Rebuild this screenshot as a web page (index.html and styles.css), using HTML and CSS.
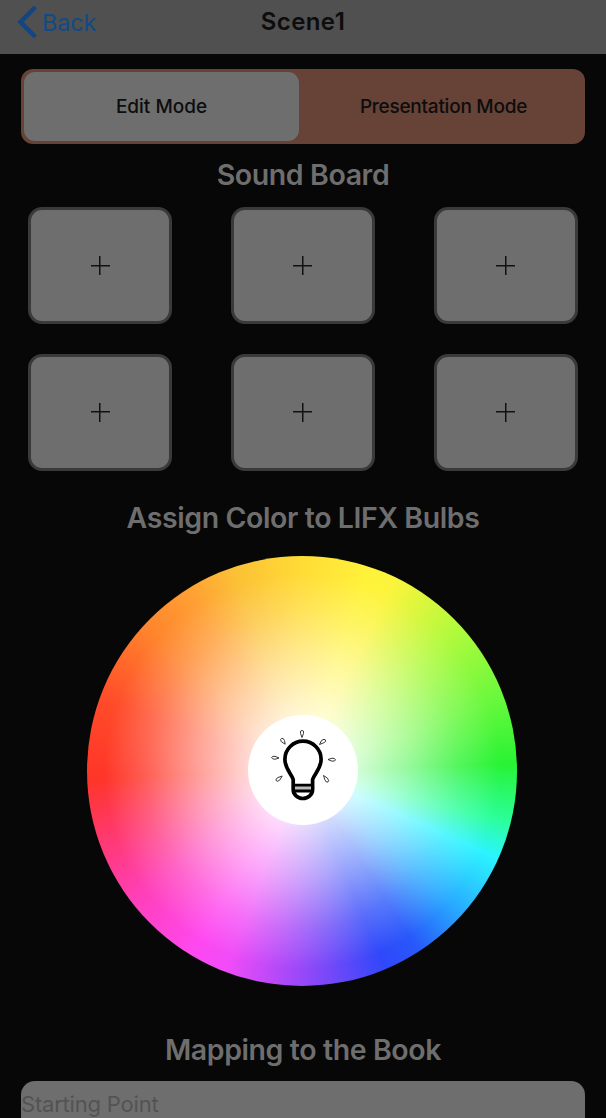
FILE: index.html
```html
<!DOCTYPE html>
<html lang="en">
<head>
<meta charset="utf-8">
<title>Scene1</title>
<link rel="stylesheet" href="styles.css">
</head>
<body>
<header class="navbar">
  <a class="back"><svg class="chevron" width="20" height="34" viewBox="0 0 20 34"><path d="M17 3.500 3.500 17 17 30.500"/></svg><span>Back</span></a>
  <h1 class="title"><span>Scene1</span></h1>
</header>
<main class="content">
  <div class="segments">
    <button class="segment selected"><span>Edit Mode</span></button>
    <button class="segment present"><span>Presentation Mode</span></button>
  </div>
  <h2 class="heading sound"><span>Sound Board</span></h2>
  <section class="board">
    <button class="pad"><i class="plus"></i></button>
    <button class="pad"><i class="plus"></i></button>
    <button class="pad"><i class="plus"></i></button>
    <button class="pad"><i class="plus"></i></button>
    <button class="pad"><i class="plus"></i></button>
    <button class="pad"><i class="plus"></i></button>
  </section>
  <h2 class="heading assign"><span>Assign Color to LIFX Bulbs</span></h2>
  <div class="wheel">
    <div class="hub">
      <svg width="110" height="110" viewBox="0 0 110 110">
        <path d="M45.200 69V64.500C43.500 59 36.900 53.500 36.900 44.300a18.100 18.100 0 0 1 36.200 0C73.100 53.500 66.300 59 64.600 64.500V74.500a9.700 9 0 0 1-19.400 0Z" fill="none" stroke="#000" stroke-width="3.700" stroke-linejoin="round"/>
        <path d="M47 71H63V76H47Z" fill="#bbb"/>
        <path d="M45 70.200H65M45 76H65" stroke="#000" stroke-width="2.800"/>
        <g fill="#fff" stroke="#222" stroke-width=".9">
          <path d="M54 22.500 52.500 18.400Q51.800 15.400 54 15.400T55.500 18.400Z"/>
          <path d="M37.200 29.200 33.300 26.700Q31.700 24.200 33.500 23.400T36.500 25.500Z"/>
          <path d="M31 43 27 44.300Q23.700 44 23.700 42.500T27 41.300Z"/>
          <path d="M34.200 61 31.800 65Q29.500 67.200 28.200 65.700T30 62.500Z"/>
          <path d="M71.500 29.500 73.500 25.500Q76.500 23.300 77.500 25T75.700 27.800Z"/>
          <path d="M80 44.500 84 43.200Q87.500 43.300 87.500 44.800T84 46.200Z"/>
          <path d="M75.500 60.500 79.300 63Q81.600 65.800 80 67T76.800 64.700Z"/>
        </g>
      </svg>
    </div>
  </div>
  <h2 class="heading mapping"><span>Mapping to the Book</span></h2>
  <div class="field"><span>Starting Point</span></div>
</main>
</body>
</html>
```
FILE: styles.css
```css
* { box-sizing: border-box; }
html, body { height: 1118px; overflow: hidden; }
body {
  margin: 0;
  background: #070707;
  font-family: Inter, "Liberation Sans", sans-serif;
  color: #0d0d0d;
}
button { border: 0; padding: 0; font: inherit; color: inherit; }
h1, h2 { margin: 0; white-space: nowrap; }
.navbar {
  height: 54px;
  background: #505050;
  display: grid;
  grid-template-columns: 1fr auto 1fr;
}
.back {
  display: flex;
  align-items: center;
  height: 44px;
  padding-left: 17px;
  gap: 5px;
  color: #114a86;
  font-size: 23.500px;
  letter-spacing: -.2px;
}
.chevron { fill: none; stroke: #114682; stroke-width: 4.500; stroke-linecap: round; }
.title { font-size: 24px; font-weight: 600; line-height: 44px; letter-spacing: .4px; }
.content { padding: 15px 21px 0; display: flex; flex-direction: column; }
.segments {
  display: grid;
  grid-template-columns: 275px 1fr;
  height: 75px;
  padding: 3px;
  border-radius: 12px;
  background: #664237;
}
.segment { font-size: 19px; font-weight: 500; background: none; border-radius: 11px; }
.segment.selected { background: #6e6e6e; }
.segment.present { padding-left: 6px; letter-spacing: -.25px; }
.heading {
  font-size: 28.500px;
  font-weight: 600;
  line-height: 36px;
  letter-spacing: -.4px;
  text-align: center;
  color: #6e6e6e;
}
.sound { margin-top: 13px; }
.board {
  display: grid;
  grid-template-columns: repeat(3, 144px);
  justify-content: space-between;
  row-gap: 29.500px;
  margin-top: 14px;
  padding: 0 7.500px 0 7px;
}
.pad {
  height: 117px;
  display: grid;
  place-items: center;
  background: #6e6e6e;
  border: 3px solid #3a3a3a;
  border-radius: 14px;
}
.plus {
  width: 19px;
  height: 19px;
  background: linear-gradient(#111, #111) center / 19px 1.500px no-repeat, linear-gradient(#111, #111) center / 1.500px 19px no-repeat;
}
.assign { margin-top: 29.500px; }
.wheel {
  align-self: center;
  width: 430px;
  height: 430px;
  margin: 20px 2px 0 0;
  border-radius: 50%;
  display: grid;
  place-items: center;
  background:
    radial-gradient(closest-side, #fff 10%, rgba(255,255,255,.8) 25%, rgba(255,255,255,.5) 50%, rgba(255,255,255,.2) 73%, rgba(255,255,255,0) 92%),
    conic-gradient(#ffdc36, #fff23a 18deg, #fbf43c 26deg, #b0fa3c 48deg, #68f83c 70deg, #28f334 88deg, #2bff9d 104deg, #2bf4ff 114deg, #2bdcff 120deg, #28a8ff 132deg, #2858fa 147deg, #3048fa 157deg, #9848f8 180deg, #f04cf8 201deg, #ff48f0 211deg, #ff3fb8 233deg, #ff3868 253deg, #ff3528 268deg, #ff4c2a 290deg, #ff832c 312deg, #ffa034 328deg, #fcc035 341deg, #ffdc36);
}
.hub {
  width: 110px;
  height: 110px;
  border-radius: 50%;
  background: #fff;
  margin-left: 2px;
  margin-top: -2px;
}
.hub svg { display: block; }
.mapping { margin-top: 46px; }
.field {
  height: 60px;
  margin-top: 13px;
  border-radius: 14px;
  background: #6e6e6e;
  color: #535353;
  font-size: 22px;
  letter-spacing: -.2px;
  line-height: 46px;
}
```
